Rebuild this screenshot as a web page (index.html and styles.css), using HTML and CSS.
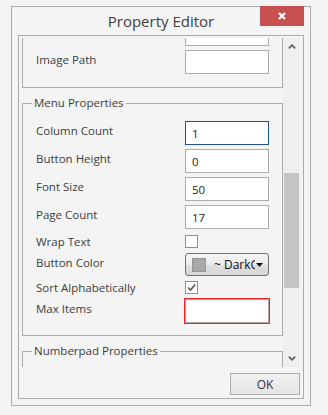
FILE: index.html
```html
<!DOCTYPE html>
<html>
<head>
<meta charset="utf-8">
<title>Property Editor</title>
<link rel="stylesheet" href="styles.css">
</head>
<body>
<div class="window">
  <div class="titlebar">Property Editor</div>
  <button class="close" aria-label="Close"><svg width="8" height="8" viewBox="0 0 8 8"><path d="M1 1L7 7M7 1L1 7" stroke="#fff" stroke-width="2.2" fill="none"/></svg></button>
  <div class="frame">
    <div class="viewport">
      <div class="scroll-area">
        <div class="scroll-content">
          <div class="group group-cut">
            <div class="row row-first"><span class="label"></span><span class="input"></span></div>
            <div class="row"><span class="label">Image Path</span><span class="input"></span></div>
          </div>
          <fieldset class="group">
            <legend>Menu Properties</legend>
            <div class="row row-first"><span class="label">Column Count</span><span class="input input-focus">1</span></div>
            <div class="row"><span class="label">Button Height</span><span class="input">0</span></div>
            <div class="row"><span class="label">Font Size</span><span class="input">50</span></div>
            <div class="row"><span class="label">Page Count</span><span class="input">17</span></div>
            <div class="row row-check row-gap6"><span class="label">Wrap Text</span><span class="checkbox"></span></div>
            <div class="row row-gap5"><span class="label">Button Color</span>
              <span class="combo"><span class="swatch"></span><span class="combo-text">~ DarkGray</span><svg class="combo-arrow" width="7" height="4" viewBox="0 0 7 4"><path d="M0 0H7L3.5 4Z" fill="#111"/></svg></span>
            </div>
            <div class="row row-check row-gap5"><span class="label">Sort Alphabetically</span><span class="checkbox"><svg width="11" height="11" viewBox="0 0 11 11"><path d="M2 5.5L4.5 8L9.2 2.6" stroke="#5a5a5a" stroke-width="1.6" fill="none"/></svg></span></div>
            <div class="row row-gap5"><span class="label">Max Items</span><span class="input input-error"></span></div>
          </fieldset>
          <fieldset class="group group-tail">
            <legend>Numberpad Properties</legend>
          </fieldset>
        </div>
      </div>
      <div class="scrollbar">
        <div class="sb-btn"><svg width="8" height="5" viewBox="0 0 8 5"><path d="M0.8 4.4L4 1.2L7.2 4.4" stroke="#5f5f5f" stroke-width="1.7" fill="none"/></svg></div>
        <div class="sb-track"><div class="sb-thumb"></div></div>
        <div class="sb-btn"><svg width="8" height="5" viewBox="0 0 8 5"><path d="M0.8 0.6L4 3.8L7.2 0.6" stroke="#5f5f5f" stroke-width="1.7" fill="none"/></svg></div>
      </div>
    </div>
    <div class="footer"><button class="ok">OK</button></div>
  </div>
</div>
</body>
</html>
```
FILE: styles.css
```css
html, body {
  margin: 0;
  padding: 0;
}
body {
  width: 328px;
  height: 415px;
  overflow: hidden;
  background: #f4f4f4;
  font-family: "Open Sans", "Noto Sans", sans-serif;
  color: #3c3c3c;
}
.window {
  position: relative;
  box-sizing: border-box;
  width: 300px;
  height: 400px;
  margin: 6px 0 0 11px;
  border: 1px solid #ababab;
  padding: 0 6px 6px;
  display: flex;
  flex-direction: column;
  background: #f4f4f4;
}
.titlebar {
  height: 28px;
  line-height: 29px;
  text-align: center;
  font-size: 15px;
  color: #404040;
  flex: none;
}
.close {
  position: absolute;
  top: -1px;
  right: 6px;
  width: 44px;
  height: 20px;
  border: 0;
  padding: 0;
  margin: 0;
  background: #c75050;
  display: flex;
  align-items: center;
  justify-content: center;
}
.frame {
  flex: 1;
  border: 1px solid #ababab;
  padding: 2px 3px 0;
  display: flex;
  flex-direction: column;
  min-height: 0;
}
.viewport {
  height: 329px;
  display: flex;
  flex: none;
}
.scroll-area {
  width: 261px;
  overflow: hidden;
}
.scroll-content {
  margin-top: -16px;
}
.group {
  margin: 7px 0 0;
  padding: 10px 13px 12px;
  border: 1px solid #ababab;
  min-width: 0;
}
.group legend {
  margin-left: -4px;
  padding: 0 2px;
  font-size: 11.5px;
  line-height: 16px;
  color: #3c3c3c;
}
.group-cut {
  margin-top: 0;
  border-top: 0;
  padding-top: 0;
  padding-bottom: 13px;
}
.group-tail {
  height: 60px;
}
.row {
  display: flex;
  align-items: flex-start;
  margin-top: 4px;
}
.row-first {
  margin-top: 0;
}
.row-gap6 {
  margin-top: 6px;
}
.row-gap5 {
  margin-top: 5px;
}
.row-check {
  height: 13px;
  align-items: center;
}
.label {
  width: 149px;
  flex: none;
  font-size: 11.5px;
  line-height: 20px;
  white-space: nowrap;
}
.row-check .label {
  line-height: 18px;
}
.input {
  box-sizing: border-box;
  width: 84px;
  height: 24px;
  border: 1px solid #abadb3;
  background: #fff;
  font-size: 11.5px;
  line-height: 23px;
  padding-left: 6px;
  color: #222;
}
.input-focus {
  border-color: #22508f;
}
.input-error {
  border-color: #d98a8a #b9a0a0 #b9a0a0 #d98a8a;
  outline: 1px solid #e42a2a;
}
.checkbox {
  box-sizing: border-box;
  width: 13px;
  height: 13px;
  border: 1px solid #8f8f8f;
  background: #fff;
  display: flex;
  align-items: center;
  justify-content: center;
}
.combo {
  box-sizing: border-box;
  width: 84px;
  height: 23px;
  border: 1px solid #707070;
  border-radius: 3px;
  background: linear-gradient(#f5f5f5 0%, #ececec 50%, #dfdfdf 51%, #d6d6d6 100%);
  display: flex;
  align-items: center;
  padding: 0 5px 0 6px;
}
.swatch {
  box-sizing: border-box;
  width: 14px;
  height: 14px;
  flex: none;
  background: #a9a9a9;
  border: 1px solid #959595;
}
.combo-text {
  flex: 1;
  min-width: 0;
  overflow: hidden;
  white-space: nowrap;
  margin-left: 8px;
  font-size: 12px;
  color: #111;
}
.combo-arrow {
  flex: none;
  margin-left: 1px;
}
.scrollbar {
  width: 17px;
  flex: none;
  background: #efefef;
  display: flex;
  flex-direction: column;
}
.sb-btn {
  height: 17px;
  display: flex;
  align-items: center;
  justify-content: center;
  flex: none;
}
.sb-track {
  flex: 1;
}
.sb-thumb {
  margin: 118px 1px 0;
  height: 115px;
  background: #c4c4c4;
}
.footer {
  display: flex;
  justify-content: flex-end;
  padding-top: 6px;
}
.ok {
  box-sizing: border-box;
  width: 70px;
  height: 22px;
  margin: 0;
  padding: 0;
  border: 1px solid #acacac;
  background: linear-gradient(#f0f0f0, #e5e5e5);
  font-family: "Open Sans", "Noto Sans", sans-serif;
  font-size: 12px;
  color: #333;
}
```
